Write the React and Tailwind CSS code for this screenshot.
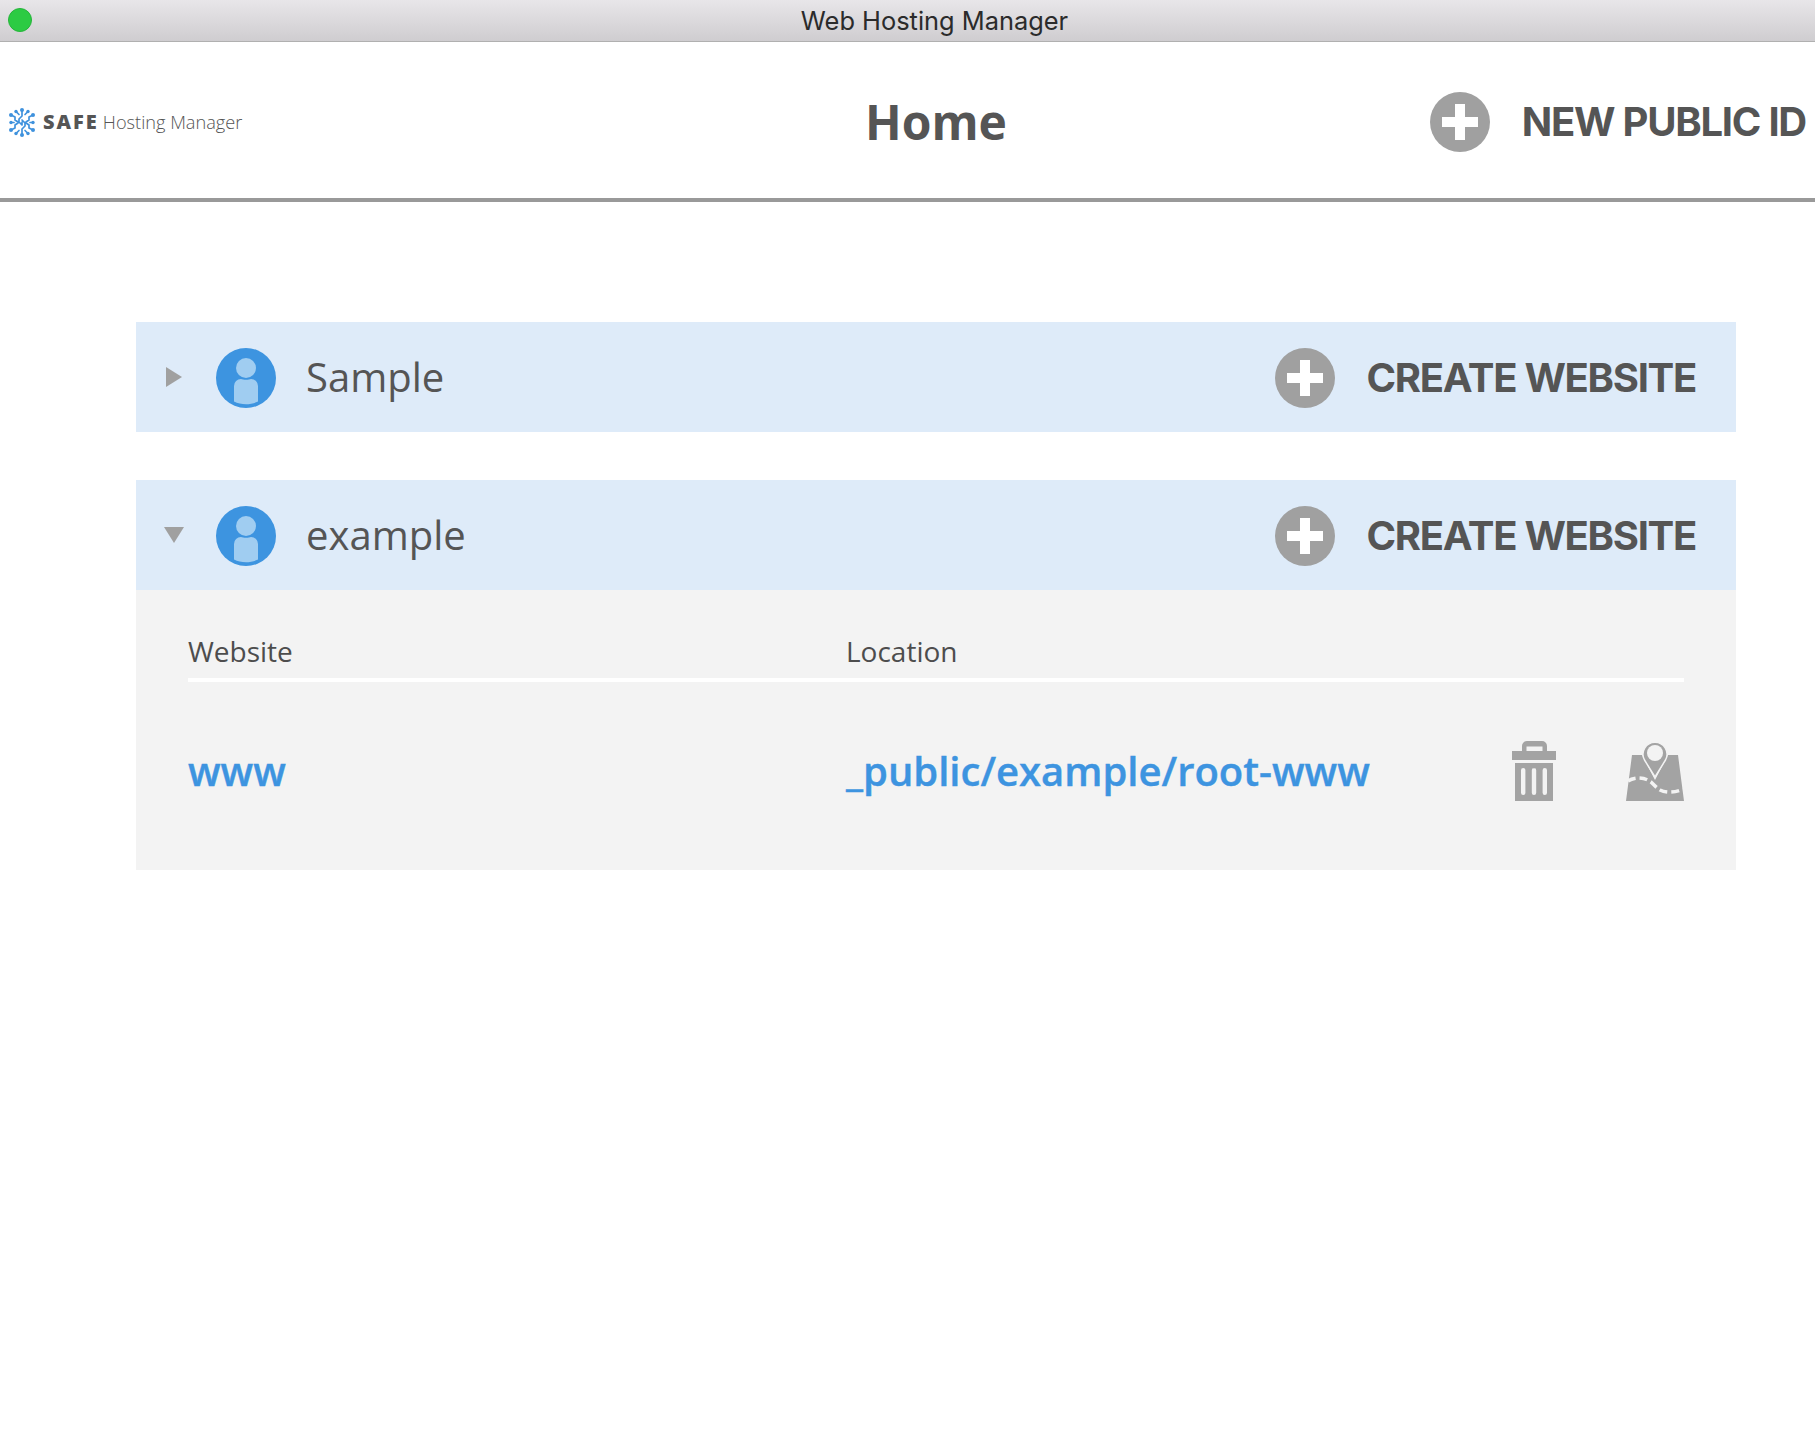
import React from 'react';

const openSans = "font-['Open_Sans',sans-serif]";
const inter = "font-['Inter',sans-serif]";

function PlusCircle({ className = '' }) {
	return (
		<svg width="60" height="60" viewBox="0 0 60 60" className={`shrink-0 ${className}`}>
			<circle cx="30" cy="30" r="30" fill="#a0a0a0" />
			<path d="M25 12h10v13h13v10H35v13H25V35H12V25h13z" fill="#fff" />
		</svg>
	);
}

function Avatar() {
	return (
		<svg width="60" height="60" viewBox="0 0 60 60" className="mt-[2px] shrink-0">
			<circle cx="30" cy="30" r="30" fill="#3d94e0" />
			<circle cx="30" cy="20" r="10" fill="#a0cdf1" />
			<path d="M18 38a7 7 0 0 1 7-7c2 1 8 1 10 0a7 7 0 0 1 7 7v15.500c-7 3.500-17 3.500-24 0z" fill="#a0cdf1" />
		</svg>
	);
}

function Logo() {
	return (
		<svg width="26" height="29" viewBox="0 0 26 29" className="shrink-0" fill="none" stroke="#3f92dd" strokeWidth="1.700" strokeLinecap="round" strokeLinejoin="round">
			<path d="M13 2v6l-3 3v3l3 3v-3M13 27v-6l3-3v-3l-3-3M2 7l4 2v3l3 2M24 7l-4 2v3l-3 2M2 22l4-2v-3l3-2M24 22l-4-2v-3l-3-2M7 3.500l3 3M19 3.500l-3 3M7 25.500l3-3M19 25.500l-3-3M2 14.500h3M24 14.500h-3" />
			<g fill="#3f92dd" stroke="none">
				<circle cx="13" cy="2" r="2" />
				<circle cx="13" cy="27" r="2" />
				<circle cx="2" cy="7" r="2" />
				<circle cx="24" cy="7" r="2" />
				<circle cx="2" cy="22" r="2" />
				<circle cx="24" cy="22" r="2" />
				<circle cx="7" cy="3.500" r="1.700" />
				<circle cx="19" cy="3.500" r="1.700" />
				<circle cx="7" cy="25.500" r="1.700" />
				<circle cx="19" cy="25.500" r="1.700" />
				<circle cx="2" cy="14.500" r="1.700" />
				<circle cx="24" cy="14.500" r="1.700" />
			</g>
		</svg>
	);
}

function TrashIcon() {
	return (
		<svg width="44" height="60" viewBox="0 0 44 60" className="shrink-0">
			<path fillRule="evenodd" d="M10 10V5a5 5 0 0 1 5-5h15a5 5 0 0 1 5 5v5h9v9H0v-9zm4.500 0h16V5.500h-16z" fill="#a3a3a3" />
			<path fillRule="evenodd" d="M3 22h38v38H3zm8.200 5a2.200 2.200 0 0 0-2.200 2.200v22.600a2.200 2.200 0 0 0 4.400 0V29.200a2.200 2.200 0 0 0-2.200-2.200zm10.800 0a2.200 2.200 0 0 0-2.200 2.200v22.600a2.200 2.200 0 0 0 4.400 0V29.200a2.200 2.200 0 0 0-2.200-2.200zm10.800 0a2.200 2.200 0 0 0-2.200 2.200v22.600a2.200 2.200 0 0 0 4.400 0V29.200a2.200 2.200 0 0 0-2.200-2.200z" fill="#a3a3a3" />
		</svg>
	);
}

function MapIcon() {
	return (
		<svg width="58" height="60" viewBox="0 0 58 60" className="shrink-0">
			<path d="M6 14h10l13 25 13-25h10l6 46H0z" fill="#a3a3a3" />
			<path d="M29 36 L18.500 19 A12 12 0 1 1 39.500 19 Z" fill="#a3a3a3" stroke="#f3f3f3" strokeWidth="1.500" />
			<circle cx="29" cy="12" r="8" fill="#f3f3f3" />
			<path d="M2 40c3-2 7-3 10-3 5 0 9 1 13 4 3 3 6 6 9 8 6 3 15 3 23-1" fill="none" stroke="#f3f3f3" strokeWidth="3.500" strokeDasharray="8 4" />
		</svg>
	);
}

function AccountRow({ name, expanded }) {
	return (
		<div className="flex h-[110px] items-center bg-[#deebf9] pl-[30px] pr-[40px]">
			<div className="flex w-[50px] shrink-0 items-center">
				{expanded ? (
					<div className="-ml-[2px] h-0 w-0 border-x-[10px] border-t-[16px] border-x-transparent border-t-[#a0a0a0]" />
				) : (
					<div className="h-0 w-0 border-y-[10px] border-l-[16px] border-y-transparent border-l-[#a0a0a0]" />
				)}
			</div>
			<Avatar />
			<span className={`ml-[30px] text-[40px] leading-none text-[#555] ${openSans}`}>{name}</span>
			<div className="ml-auto flex items-center gap-[32px]">
				<PlusCircle className="mt-[2px]" />
				<span className={`mt-[2px] text-[40px] leading-none font-bold tracking-[-1.3px] text-[#555] ${inter}`}>CREATE WEBSITE</span>
			</div>
		</div>
	);
}

export default function App() {
	return (
		<div className="min-h-[1452px] bg-white">
			{/* window title bar */}
			<div className="relative flex h-[42px] items-center justify-center border-b border-[#b0b0b0] bg-gradient-to-b from-[#e8e6e9] to-[#cfcdd0] pl-[54px]">
				<div className="absolute top-[8px] left-[8px] h-[24px] w-[24px] rounded-full border border-[#25b53a] bg-[#2ccb43]" />
				<span className={`text-[25.4px] leading-none text-[#2b2b2b] ${inter}`}>Web Hosting Manager</span>
			</div>

			{/* page header */}
			<div className="flex h-[160px] items-center border-b-4 border-[#999] pt-1 pr-[9px] pl-[9px]">
				<div className="flex w-[520px] items-center gap-[8px]">
					<Logo />
					<span className={`text-[20px] leading-none font-extrabold tracking-[2px] text-[#555] ${openSans}`}>SAFE</span>
					<span className={`-ml-[4px] text-[18.2px] leading-none font-light text-[#555] ${openSans}`}>Hosting Manager</span>
				</div>
				<div className={`ml-[336px] text-[48px] leading-none font-bold text-[#555] ${openSans}`}>Home</div>
				<div className="ml-auto flex items-center gap-[32px]">
					<PlusCircle />
					<span className={`text-[40px] leading-none font-bold tracking-[-1.25px] text-[#555] ${inter}`}>NEW PUBLIC ID</span>
				</div>
			</div>

			{/* accounts */}
			<div className="flex flex-col gap-[48px] pt-[120px] pr-[79px] pl-[136px]">
				<AccountRow name="Sample" />
				<div>
					<AccountRow name="example" expanded />
					<div className="h-[280px] bg-[#f3f3f3] px-[52px] pt-[42px]">
						<div className={`flex h-[50px] items-start border-b-4 border-white text-[28px] leading-[38px] text-[#4d4d4d] ${openSans}`}>
							<div className="w-[658px]">Website</div>
							<div>Location</div>
						</div>
						<div className={`mt-[45px] flex h-[88px] items-center text-[40px] leading-none font-semibold text-[#3d94e0] [-webkit-text-stroke:0.4px_#3d94e0] ${openSans}`}>
							<div className="w-[658px]">www</div>
							<div>_public/example/root-www</div>
							<div className="ml-auto flex items-center gap-[70px]">
								<TrashIcon />
								<MapIcon />
							</div>
						</div>
					</div>
				</div>
			</div>
		</div>
	);
}
